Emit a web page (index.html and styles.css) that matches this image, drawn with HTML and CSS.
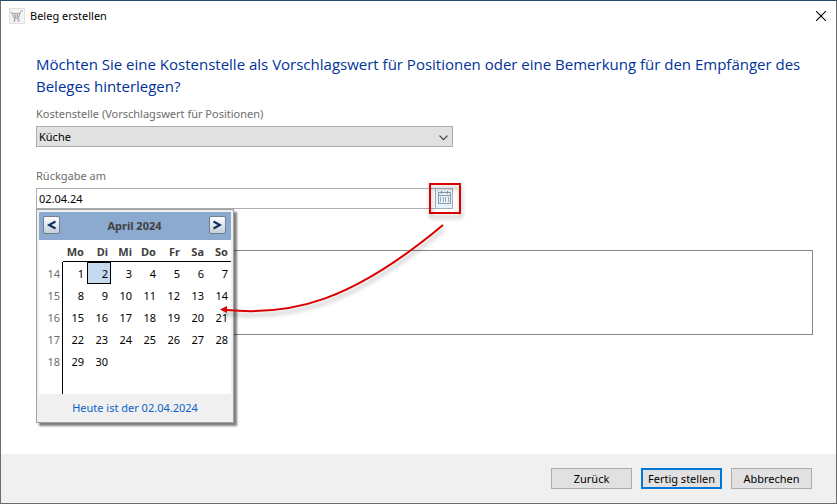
FILE: index.html
```html
<!DOCTYPE html>
<html lang="de">
<head>
    <meta charset="UTF-8">
    <meta name="viewport" content="width=device-width, initial-scale=1.0">
    <title>Beleg erstellen</title>
    <link rel="stylesheet" href="styles.css">
</head>
<body>

<div class="window">
    <header class="titlebar">
        <svg class="app-icon" width="16" height="16" viewBox="0 0 16 16">
            <rect x="0.5" y="0.5" width="15" height="15" fill="#f4f4f4" stroke="#e0e0e0"/>
            <path d="M1.500 4.500H3L5 10.500H9.500L11.500 3.500L14 2.500M3.500 5.500H11M4.500 8H10M6 5.500L6.500 10M8.500 5.500V10" fill="none" stroke="#a6a6a6"/>
            <circle cx="5.5" cy="12.500" r="1" fill="#909090"/>
            <circle cx="9.5" cy="12.500" r="1" fill="#909090"/>
        </svg>
        <span class="title">Beleg erstellen</span>
        <button class="close" type="button" aria-label="Schließen">
            <svg width="10" height="10" viewBox="0 0 10 10"><path d="M0 0L10 10M10 0L0 10" stroke="#000" stroke-width="1.1"/></svg>
        </button>
    </header>

    <main class="content">
        <h1>Möchten Sie eine Kostenstelle als Vorschlagswert für Positionen oder eine Bemerkung für den Empfänger des Beleges hinterlegen?</h1>

        <div class="field">
            <label for="kostenstelle">Kostenstelle (Vorschlagswert für Positionen)</label>
            <div class="select-box">
                <select id="kostenstelle">
                    <option>Küche</option>
                </select>
                <svg class="chevron" width="9" height="6" viewBox="0 0 9 6"><path d="M0.5 0.7L4.5 4.7L8.5 0.7" fill="none" stroke="#404040" stroke-width="1.2"/></svg>
            </div>
        </div>

        <div class="field">
            <label for="rueckgabe">Rückgabe am</label>
            <div class="date-box">
                <input type="text" id="rueckgabe" value="02.04.24">
                <button class="date-button" type="button" aria-label="Kalender">
                    <svg width="13" height="13" viewBox="0 0 13 13">
                        <path d="M0.5 1.5H12.5V12.5H0.5ZM0.5 4.5H12.5" fill="none" stroke="#8c98a2"/>
                        <path d="M3.5 0V3M9.5 0V3" stroke="#8c98a2"/>
                        <path d="M2.5 6V11M5.5 6V11M7.5 6V11M10.5 6V11" stroke="#9aa6b0"/>
                    </svg>
                </button>

                <div class="calendar">
                    <div class="calendar-head">
                        <button type="button" aria-label="Vorheriger Monat"><svg width="10" height="10" viewBox="0 0 10 10"><path d="M8.5 1.5L2 5L8.5 8.5" fill="none" stroke="#0b2f5b" stroke-width="2"/></svg></button>
                        <span>April 2024</span>
                        <button type="button" aria-label="Nächster Monat"><svg width="10" height="10" viewBox="0 0 10 10"><path d="M1.5 1.5L8 5L1.5 8.5" fill="none" stroke="#0b2f5b" stroke-width="2"/></svg></button>
                    </div>
                    <table>
                        <thead>
                            <tr><td></td><th>Mo</th><th>Di</th><th>Mi</th><th>Do</th><th>Fr</th><th>Sa</th><th>So</th></tr>
                        </thead>
                        <tbody>
                            <tr><td class="week">14</td><td>1</td><td class="today">2</td><td>3</td><td>4</td><td>5</td><td>6</td><td>7</td></tr>
                            <tr><td class="week">15</td><td>8</td><td>9</td><td>10</td><td>11</td><td>12</td><td>13</td><td>14</td></tr>
                            <tr><td class="week">16</td><td>15</td><td>16</td><td>17</td><td>18</td><td>19</td><td>20</td><td>21</td></tr>
                            <tr><td class="week">17</td><td>22</td><td>23</td><td>24</td><td>25</td><td>26</td><td>27</td><td>28</td></tr>
                            <tr><td class="week">18</td><td>29</td><td>30</td><td></td><td></td><td></td><td></td><td></td></tr>
                            <tr><td class="week"></td><td></td><td></td><td></td><td></td><td></td><td></td><td></td></tr>
                        </tbody>
                    </table>
                    <a class="calendar-foot" href="#">Heute ist der 02.04.2024</a>
                </div>

                <!-- red frame round the calendar button and arrow to the popup -->
                <div class="marker"></div>
                <svg class="arrow" width="240" height="110" viewBox="0 0 240 110">
                    <path d="M229 17C137 94 77 108 13 102" fill="none" stroke="#d90000" stroke-width="2"/>
                    <path d="M6 101.500L13 98V105Z" fill="#d90000"/>
                </svg>
            </div>
        </div>

        <textarea class="remark" aria-label="Bemerkung"></textarea>
    </main>

    <footer class="footer">
        <button type="button">Zurück</button>
        <button class="primary" type="button">Fertig stellen</button>
        <button type="button">Abbrechen</button>
    </footer>
</div>

</body>
</html>
```
FILE: styles.css
```css
* {
    box-sizing: border-box;
}
body {
    margin: 0;
    font-family: "Noto Sans", "Open Sans", sans-serif;
    font-size: 11px;
    line-height: 16px;
    color: #000;
}
button, input, select, textarea {
    font: inherit;
    color: inherit;
    margin: 0;
    padding: 0;
    border-radius: 0;
}
.window {
    display: flex;
    flex-direction: column;
    min-height: 100vh;
    background: #fff;
    border: 1px solid #6b6b6b;
    border-top-color: #24476b;
}
.titlebar {
    display: flex;
    align-items: center;
    height: 30px;
    padding: 0 10px 0 8px;
}
.title {
    flex: 1;
    margin-left: 5px;
}
.close {
    display: flex;
    border: none;
    background: none;
}
.content {
    flex: 1;
    padding: 22px 23px 24px 35px;
}
h1 {
    margin: 0 0 9px;
    font-family: "Open Sans", "Noto Sans", sans-serif;
    font-size: 15px;
    font-weight: normal;
    line-height: 22px;
    color: #003399;
}
.field {
    width: 417px;
    max-width: 100%;
    margin-bottom: 21px;
}
.field label {
    display: block;
    margin-bottom: 4px;
    color: #6d6d6d;
}
.select-box, .date-box {
    position: relative;
    display: flex;
    height: 21px;
}
select {
    flex: 1;
    appearance: none;
    padding: 0 2px;
    border: 1px solid #adadb5;
    background: #e1e1e1;
}
.chevron {
    position: absolute;
    right: 5px;
    top: 9px;
    pointer-events: none;
}
.date-box {
    border: 1px solid #abadb3;
}
.date-box input {
    flex: 1;
    min-width: 0;
    padding: 0 2px;
    border: none;
    background: #fff;
}
.date-button {
    display: flex;
    justify-content: center;
    width: 17px;
    padding-top: 2px;
    border: none;
    border-left: 1px solid #abadb3;
    background: #e5f1fb;
}
.calendar {
    position: absolute;
    left: -1px;
    top: 20px;
    z-index: 1;
    width: 198px;
    padding: 2px;
    border: 1px solid #a0a0a0;
    background: #f0f0f0;
    box-shadow: 3px 3px 2px rgba(0, 0, 0, 0.5);
}
.calendar-head {
    display: flex;
    justify-content: space-between;
    align-items: center;
    height: 28px;
    padding: 0 5px 0 4px;
    background: #8caad0;
    color: #404040;
    font-weight: bold;
}
.calendar-head button {
    display: flex;
    justify-content: center;
    align-items: center;
    width: 17px;
    height: 18px;
    margin-bottom: 2px;
    border: 1px solid #6f7f92;
    border-radius: 2px;
    background: linear-gradient(#fff, #c3cedb);
}
table {
    width: 100%;
    table-layout: fixed;
    border-collapse: separate;
    border-spacing: 0;
    background: #fff;
}
td, th {
    height: 22px;
    padding: 2px 3px 0 0;
    text-align: right;
}
th {
    border-bottom: 1px solid #000;
    color: #404040;
}
.week {
    padding-right: 2px;
    border-right: 1px solid #000;
    color: #6d6d6d;
}
.today {
    padding-right: 2px;
    border: 1px solid #000;
    background: #c4daef;
}
.calendar-foot {
    display: block;
    padding: 6px 0 4px;
    text-align: center;
    text-decoration: none;
    color: #0a63c9;
}
.marker {
    position: absolute;
    right: -9px;
    top: -6px;
    z-index: 2;
    width: 32px;
    height: 31px;
    border: 2px solid #d90000;
    filter: drop-shadow(1px 4px 2px rgba(0, 0, 0, 0.3));
}
.arrow {
    position: absolute;
    right: -2px;
    top: 19px;
    z-index: 2;
    pointer-events: none;
    filter: drop-shadow(1px 4px 2px rgba(0, 0, 0, 0.3));
}
.remark {
    display: block;
    width: 100%;
    height: 85px;
    margin-top: 41px;
    border: 1px solid #828790;
    background: #fff;
    resize: none;
}
.footer {
    display: flex;
    justify-content: flex-end;
    gap: 9px;
    padding: 14px 24px;
    background: #f0f0f0;
}
.footer button {
    width: 81px;
    height: 21px;
    border: 1px solid #adadad;
    background: #e1e1e1;
}
.footer .primary {
    border: 2px solid #0078d7;
}
```
